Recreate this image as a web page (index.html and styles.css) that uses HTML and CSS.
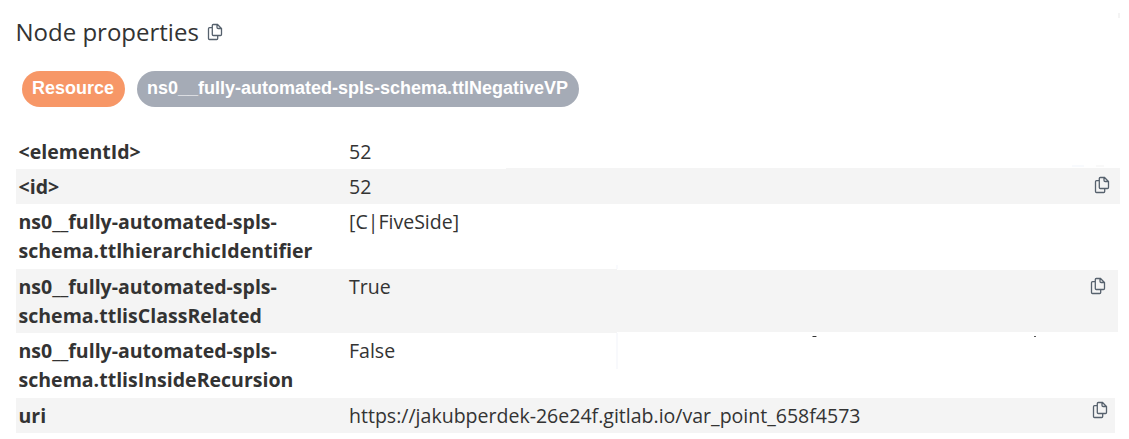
FILE: index.html
```html
<!DOCTYPE html>
<html lang="en">
<head>
<meta charset="utf-8">
<title>Node properties</title>
<link rel="stylesheet" href="styles.css">
</head>
<body>
<svg width="0" height="0" class="defs"><symbol id="copy" viewBox="0 0 16 18"><path d="M6.3 1.5h4.2l4 4v6q0 1-1 1H6.3q-1 0-1-1v-9q0-1 1-1z M10 1.7v2.6q0 1.2 1.2 1.2h3 M5.3 4.7H2.5q-1 0-1 1v9.8q0 1 1 1h7.2q1 0 1-1v-3"/></symbol></svg>
<main class="panel">
<header class="title"><h1>Node properties</h1><svg class="icon"><use href="#copy"/></svg></header>
<div class="labels"><span class="pill resource">Resource</span><span class="pill negative">ns0__fully-automated-spls-schema.ttlNegativeVP</span></div>
<div class="table">
<div class="row r1"><div class="key">&lt;elementId&gt;</div><div class="value">52</div></div>
<div class="row r2 shaded"><div class="key">&lt;id&gt;</div><div class="value">52</div><svg class="icon"><use href="#copy"/></svg></div>
<div class="row r3"><div class="key">ns0__fully-automated-spls-<br>schema.ttlhierarchicIdentifier</div><div class="value">[C|FiveSide]</div></div>
<div class="row r4"><div class="key">ns0__fully-automated-spls-<br>schema.ttlisClassRelated</div><div class="value">True</div><svg class="icon"><use href="#copy"/></svg></div>
<div class="row r5"><div class="key">ns0__fully-automated-spls-<br>schema.ttlisInsideRecursion</div><div class="value">False</div></div>
<div class="row r6 shaded"><div class="key">uri</div><div class="value">https://jakubperdek-26e24f.gitlab.io/var_point_658f4573</div><svg class="icon"><use href="#copy"/></svg></div>
</div>
</main>
<i class="mark divider"></i><i class="mark divider-top"></i><i class="mark dash"></i><i class="mark dot"></i><i class="mark speck"></i><i class="mark hint"></i><i class="mark trace-a"></i><i class="mark trace-b"></i>
</body>
</html>
```
FILE: styles.css
```css
* { box-sizing: border-box; }
body { margin: 0; background: #fff; color: #333; font: 19.55px/29px "Open Sans", sans-serif; overflow: hidden; }
.defs { position: absolute; }
.panel { padding: 14px 9px 0 15.5px; }
.title { display: flex; align-items: center; gap: 8px; height: 35px; }
h1 { margin: 0; font-size: 24px; font-weight: 400; line-height: 35px; }
.icon { width: 16px; height: 18px; fill: none; stroke: #56616d; stroke-width: 1.3; flex: none; }
.labels { display: flex; gap: 12px; padding: 22px 6px 0 6.5px; }
.pill { height: 36px; border-radius: 18px; padding: 0 10px; color: #fff; font: bold 18px/34px "Liberation Sans", sans-serif; white-space: nowrap; }
.resource { background: #f79767; width: 103px; }
.negative { background: #a5abb6; width: 442px; }
.table { margin: 27px 0 0 .5px; }
.row { display: flex; padding: 3px 0 0 2.5px; }
.shaded { background: #f4f4f4; }
.key { width: 330.5px; font-weight: 700; }
.value { flex: 1; }
.r1 { height: 35px; }
.r2 { height: 35px; width: 1104px; padding-right: 10px; }
.r3 { height: 65px; }
.r4 { height: 64px; width: 1102px; padding-right: 12px; background: linear-gradient(#f4f4f4, #f4f4f4) 0 0 / 601px 64px no-repeat, linear-gradient(#f4f4f4, #f4f4f4) 601px 1px / 501px 62px no-repeat; }
.r5 { height: 65px; }
.r6 { height: 35px; width: 1099px; padding-right: 7px; }
.row .icon { margin-top: 4px; }
.r4 .icon { margin-top: 5px; }
.r6 .icon { margin-top: 0; }
.mark { position: absolute; }
.divider { left: 616px; top: 333px; width: 2px; height: 36px; background: #f8f9fc; }
.divider-top { left: 616px; top: 265px; width: 2px; height: 4px; background: #f9fafd; }
.dash { left: 812px; top: 336px; width: 5px; height: 1px; background: linear-gradient(90deg, #999 20%, #333 20% 80%, #aaa 80%); }
.dot { left: 1034px; top: 336px; width: 2px; height: 1px; background: #555; }
.speck { left: 1118px; top: 13px; width: 2px; height: 5px; background: #f4f4f4; }
.hint { left: 506px; top: 168px; width: 614px; height: 1px; background: #f4f4f4; }
.trace-a { left: 1072px; top: 165px; width: 12px; height: 2px; background: #f8fafd; }
.trace-b { left: 1096px; top: 165px; width: 8px; height: 2px; background: #f9f9f9; }
```
